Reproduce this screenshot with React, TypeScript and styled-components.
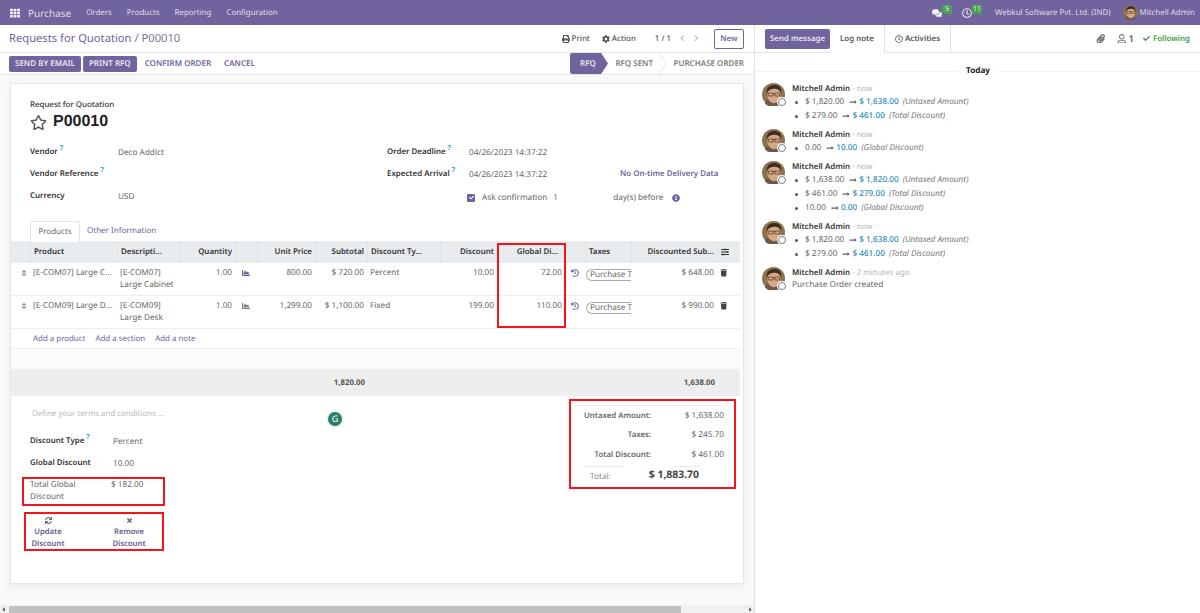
import { FunctionComponent, ReactNode } from 'react';
import styled, { createGlobalStyle } from 'styled-components';
import {
  FaCaretLeft,
  FaCaretRight,
  FaChartArea,
  FaCheck,
  FaChevronLeft,
  FaChevronRight,
  FaCog,
  FaComments,
  FaHistory,
  FaInfoCircle,
  FaLongArrowAltRight,
  FaPaperclip,
  FaPrint,
  FaRegClock,
  FaRegStar,
  FaRegUser,
  FaSlidersH,
  FaSort,
  FaSync,
  FaTh,
  FaTimes,
  FaTrash,
} from 'react-icons/fa';

const purple = '#71639e';
const red = '#f5131c';

const GlobalStyle = createGlobalStyle`
  html, body {
    margin: 0;
    height: 100%;
    overflow: hidden;
  }
  body {
    font-family: 'Noto Sans', 'Liberation Sans', sans-serif;
    font-size: 8.2px;
    line-height: 12px;
    color: #666;
    background: #fff;
    text-rendering: geometricPrecision;
  }
`;

const Page = styled.div`
  width: 1200px;
  height: 613px;
  display: flex;
  flex-direction: column;
  overflow: hidden;
`;

const Navbar = styled.header`
  height: 25px;
  flex: none;
  background: ${purple};
  color: #e0dcea;
  display: flex;
  align-items: center;
  padding: 0 5px 0 10px;
  font-size: 7.9px;
`;

const AppName = styled.span`
  font-size: 10px;
  margin: 0 15px 0 8px;
`;

const NavItem = styled.span`
  margin-right: 15px;
`;

const NavRight = styled.div`
  margin-left: auto;
  display: flex;
  align-items: center;
`;

const NavIcon = styled.span<{ $gap: number }>`
  position: relative;
  display: flex;
  margin-right: ${(p) => p.$gap}px;
  font-size: 10px;
  color: #f2f0f6;
`;

const Badge = styled.span`
  position: absolute;
  left: 10px;
  top: -3px;
  height: 9px;
  min-width: 10px;
  padding: 0 1px;
  box-sizing: border-box;
  background: #49a05a;
  color: #e6f2e6;
  font-size: 7px;
  line-height: 9px;
  text-align: center;
`;

const NavUser = styled.span`
  display: flex;
  align-items: center;
  gap: 2px;
  margin-left: 12px;
`;

const Columns = styled.div`
  flex: 1;
  min-height: 0;
  display: flex;
`;

const Main = styled.main`
  width: 754px;
  flex: none;
  display: flex;
  flex-direction: column;
  border-right: 1px solid #dee2e6;
`;

const TopRow = styled.div`
  height: 28px;
  flex: none;
  box-sizing: border-box;
  border-bottom: 1px solid #e3e5e8;
  display: flex;
  align-items: center;
  padding: 0 10px 0 9px;
`;

const Breadcrumb = styled.div`
  font-size: 11.2px;
  color: ${purple};
`;

const Current = styled.span`
  color: #7b7396;
`;

const TopActions = styled.div`
  margin-left: auto;
  display: flex;
  align-items: center;
  font-size: 7.9px;
  font-weight: 500;
  color: #555;
`;

const ActionLink = styled.span<{ $gap: number }>`
  display: flex;
  align-items: center;
  gap: 2px;
  margin-right: ${(p) => p.$gap}px;
`;

const Pager = styled.span`
  margin-right: 8px;
`;

const PagerArrows = styled.span`
  display: flex;
  gap: 7px;
  margin-right: 15px;
  font-size: 6.5px;
  color: #b5b5b5;
`;

const NewButton = styled.span`
  box-sizing: border-box;
  width: 30px;
  height: 20px;
  border: 1px solid ${purple};
  border-radius: 2px;
  color: ${purple};
  font-weight: 600;
  display: flex;
  align-items: center;
  justify-content: center;
`;

const StatusRow = styled.div`
  height: 22px;
  flex: none;
  box-sizing: border-box;
  border-bottom: 1px solid #e3e5e8;
  display: flex;
  align-items: center;
  padding: 0 10px 0 9px;
`;

const FilledButton = styled.span`
  height: 16px;
  padding: 0 6px;
  margin-right: 2px;
  background: ${purple};
  border-radius: 2px;
  color: #e9e6f0;
  font-size: 8px;
  font-weight: 600;
  line-height: 16px;
`;

const GhostButton = styled.span`
  margin: 0 7px 0 6px;
  color: ${purple};
  font-size: 8px;
  font-weight: 600;
`;

const Stages = styled.div`
  margin-left: auto;
  display: flex;
  align-items: center;
  height: 21px;
  font-size: 8px;
  font-weight: 600;
  color: #7a7a7a;
`;

const ActiveStage = styled.span`
  height: 21px;
  width: 38px;
  box-sizing: border-box;
  padding-left: 10px;
  line-height: 21px;
  background: ${purple};
  color: #e9e6f0;
  border-radius: 2px 0 0 2px;
  clip-path: polygon(0 0, 82% 0, 100% 50%, 82% 100%, 0 100%);
`;

const Stage = styled.span<{ $width: number }>`
  width: ${(p) => p.$width}px;
  text-align: right;
`;

const StageDivider = styled.svg`
  width: 7px;
  height: 21px;
  margin-left: 6px;
  margin-right: 7px;
`;

const Content = styled.div`
  flex: 1;
  min-height: 0;
  background: #f9f9fa;
  padding: 8px 10px 0 10px;
`;

const Sheet = styled.section`
  height: 501px;
  box-sizing: border-box;
  background: #fff;
  border: 1px solid #e4e6e8;
  box-shadow: 0 3px 8px rgba(0, 0, 0, 0.06);
  display: flex;
  flex-direction: column;
  position: relative;
`;

const TitleBlock = styled.div`
  padding: 15px 0 0 19px;
  height: 35px;
`;

const Overline = styled.div`
  color: #333;
  font-size: 7.9px;
  font-weight: 500;
`;

const RecordName = styled.div`
  display: flex;
  align-items: center;
  gap: 6px;
  margin-top: 1px;
  font-family: 'Liberation Sans', Arial, sans-serif;
  font-size: 16px;
  line-height: 20px;
  font-weight: 700;
  color: #1f1f1f;
`;

const StarIcon = styled(FaRegStar)`
  font-size: 17px;
  color: #555;
`;

const FieldGrid = styled.div`
  display: grid;
  grid-template-columns: 88px 269px 82px 151px 1fr;
  grid-auto-rows: 22px;
  align-items: center;
  padding: 7px 0 0 19px;
  height: 66px;
`;

const Label = styled.span`
  color: #333;
  font-size: 7.9px;
  font-weight: 600;
`;

const Help = styled.sup`
  color: #2e9bc6;
  font-size: 7px;
  line-height: 0;
  font-weight: 700;
  margin-left: 2px;
`;

const Value = styled.span`
  color: #666;
  padding-top: 1px;
`;

const DeliveryNote = styled.span`
  color: ${purple};
  font-size: 7.9px;
  font-weight: 600;
  text-align: left;
`;

const ConfirmCell = styled.div`
  grid-column: 3 / span 3;
  display: flex;
  align-items: center;
  padding: 3px 0 0 80px;
`;

const CheckBox = styled.span`
  width: 8px;
  height: 8px;
  background: ${purple};
  border-radius: 1px;
  display: flex;
  align-items: center;
  justify-content: center;
  color: #fff;
  font-size: 5px;
  margin-right: 7px;
`;

const ConfirmDays = styled.span`
  margin-left: 6px;
  width: 60px;
`;

const InfoIcon = styled(FaInfoCircle)`
  margin-left: 9px;
  font-size: 8px;
  color: ${purple};
`;

const Tabs = styled.div`
  margin-top: 14px;
  height: 20px;
  padding-left: 19px;
  display: flex;
  align-items: flex-end;
  font-size: 8px;
`;

const ActiveTab = styled.span`
  box-sizing: border-box;
  width: 50px;
  height: 21px;
  margin-bottom: -1px;
  background: #fff;
  border: 1px solid #e2e4e6;
  border-bottom: none;
  border-radius: 2px 2px 0 0;
  text-align: center;
  line-height: 20px;
  position: relative;
  z-index: 1;
`;

const Tab = styled.span`
  margin-left: 7px;
  line-height: 20px;
  color: ${purple};
`;

const TableWrap = styled.div`
  position: relative;
  margin-right: 3px;
`;

const columns = '19px 87px 63px 55px 22px 58px 52px 73px 57px 68px 20px 46px 86px 23px';

const HeadRow = styled.div`
  display: grid;
  grid-template-columns: ${columns};
  height: 22px;
  background: #e9ecef;
  color: #333;
  font-size: 7.9px;
  font-weight: 600;
`;

const HeadCell = styled.div<{ $right?: boolean; $plain?: boolean; $pad?: number }>`
  display: flex;
  align-items: center;
  justify-content: ${(p) => (p.$right ? 'flex-end' : 'flex-start')};
  padding: 0 ${(p) => p.$pad ?? 3}px 0 3px;
  overflow: hidden;
  white-space: nowrap;
  border-left: ${(p) => (p.$plain ? 'none' : '1px solid #dfe2e6')};
`;

const BodyRow = styled.div`
  display: grid;
  grid-template-columns: ${columns};
  height: 33px;
  box-sizing: border-box;
  border-bottom: 1px solid #eceeef;
  padding-top: 4px;
`;

const Cell = styled.div<{ $right?: boolean; $flush?: boolean }>`
  padding: 0 ${(p) => (p.$flush ? 0 : 3)}px;
  text-align: ${(p) => (p.$right ? 'right' : 'left')};
  white-space: nowrap;
`;

const IconCell = styled.div<{ $color?: string; $size?: number; $inset?: number }>`
  display: flex;
  justify-content: ${(p) => (p.$inset ? 'flex-start' : 'center')};
  padding: 2px 0 0 ${(p) => p.$inset ?? 0}px;
  font-size: ${(p) => p.$size ?? 8}px;
  color: ${(p) => p.$color ?? '#777'};
`;

const TaxTag = styled.span`
  display: block;
  margin: 2px 0 0 1px;
  width: 45px;
  height: 12px;
  box-sizing: border-box;
  border: 1px solid #aaa;
  border-right: none;
  border-radius: 7px 0 0 7px;
  padding-left: 3px;
  line-height: 10px;
`;

const AddRow = styled.div`
  height: 20px;
  box-sizing: border-box;
  padding-left: 22px;
  border-bottom: 1px solid #eceeef;
  display: flex;
  align-items: center;
  gap: 10px;
  font-size: 7.9px;
  color: ${purple};
`;

const BlankRow = styled.div`
  height: 20px;
  background: #fbfbfb;
`;

const TotalRow = styled.div`
  display: grid;
  grid-template-columns: ${columns};
  height: 27px;
  align-items: center;
  background: #eeeeee;
  font-size: 7.8px;
  font-weight: 700;
  color: #555;
`;

const SpanLeft = styled.div`
  grid-column: 1 / span 7;
  padding-right: 2px;
  text-align: right;
`;

const SpanRight = styled.div`
  grid-column: 8 / span 6;
  padding-right: 2px;
  text-align: right;
`;

const GlobalColumnBox = styled.div`
  position: absolute;
  left: 486px;
  top: 2px;
  width: 69px;
  height: 85px;
  box-sizing: border-box;
  border: 2px solid ${red};
`;

const Footer = styled.div`
  flex: 1;
  position: relative;
  display: flex;
  justify-content: space-between;
  padding-right: 7px;
`;

const FooterLeft = styled.div`
  padding: 12px 0 0 11px;
  width: 153px;
`;

const Terms = styled.div`
  color: #b9b9b9;
  font-size: 7.9px;
  padding-left: 10px;
  height: 12px;
`;

const DiscountGrid = styled.div`
  display: grid;
  grid-template-columns: 83px 1fr;
  grid-auto-rows: 22px;
  align-items: center;
  margin-top: 10px;
  padding-left: 8px;
`;

const TotalGlobalBox = styled.div`
  box-sizing: border-box;
  width: 143px;
  height: 29px;
  margin-top: 3px;
  border: 2px solid ${red};
  padding: 0 0 0 6px;
  display: grid;
  grid-template-columns: 81px 1fr;
  line-height: 12px;
`;

const ButtonsBox = styled.div`
  box-sizing: border-box;
  width: 140px;
  height: 39px;
  margin: 6px 0 0 2px;
  border: 2px solid ${red};
  display: grid;
  grid-template-columns: 44px 66px;
  justify-content: space-between;
  color: #655a90;
  font-size: 7.7px;
  font-weight: 600;
  text-align: center;
  line-height: 12px;
`;

const ButtonIcon = styled.div`
  display: flex;
  justify-content: center;
  height: 12px;
  align-items: center;
  font-size: 7px;
`;

const Totals = styled.div`
  box-sizing: border-box;
  width: 167px;
  height: 90px;
  margin-top: 3px;
  border: 2px solid ${red};
  padding: 4px 10px 0 2px;
`;

const TotalsLine = styled.div<{ $first?: boolean }>`
  display: grid;
  grid-template-columns: 78px 1fr;
  height: 19.5px;
  align-items: center;
  color: #666;
  border-top: ${(p) => (p.$first ? '1px solid #eee' : 'none')};
`;

const TotalsKey = styled.span`
  text-align: right;
  font-size: 7.8px;
  font-weight: 600;
`;

const TotalsValue = styled.span`
  text-align: right;
`;

const GrandTotal = styled.div`
  position: relative;
  display: grid;
  grid-template-columns: 40px 1fr;
  margin-top: 1px;
  padding-left: 11px;
  align-items: center;
  &::after {
    content: '';
    position: absolute;
    top: 0;
    right: 25px;
    width: 25px;
    height: 1px;
    background: #e8e8e8;
  }
`;

const GrandKey = styled.span`
  color: #888;
  padding-left: 6px;
  border-top: 1px solid #e8e8e8;
  height: 18px;
  line-height: 20px;
`;

const GrandValue = styled.span`
  font-size: 10.4px;
  font-weight: 700;
  color: #444;
  text-align: right;
  padding-right: 25px;
`;

const Grammarly = styled.span`
  position: absolute;
  left: 315px;
  top: 14px;
  width: 14px;
  height: 14px;
  border-radius: 50%;
  background: #2a7e6b;
  border: 2px solid #eef1f1;
  color: #fff;
  font-size: 9px;
  line-height: 14px;
  text-align: center;
`;

const ScrollBar = styled.div`
  height: 8px;
  flex: none;
  background: #f1f1f1;
  display: flex;
  align-items: center;
  font-size: 7px;
  color: #555;
`;

const ScrollThumb = styled.div`
  width: 672px;
  height: 7px;
  margin-left: 2px;
  background: #c1c1c1;
`;

const ScrollEnd = styled(FaCaretRight)`
  margin-left: auto;
`;

const Chatter = styled.aside`
  flex: 1;
  display: flex;
  flex-direction: column;
  background: #fff;
`;

const ChatterBar = styled.div`
  height: 28px;
  flex: none;
  box-sizing: border-box;
  border-bottom: 1px solid #dee2e6;
  display: flex;
  align-items: stretch;
  padding: 0 10px 0 10px;
  font-size: 7.9px;
  font-weight: 600;
`;

const SendButton = styled.span`
  align-self: flex-start;
  margin-top: 4px;
  width: 65px;
  height: 20px;
  background: ${purple};
  border-radius: 2px;
  color: #e9e6f0;
  text-align: center;
  line-height: 20px;
`;

const ChatTab = styled.span<{ $active?: boolean }>`
  box-sizing: border-box;
  height: 28px;
  padding: 0 10px;
  display: flex;
  align-items: center;
  gap: 2px;
  color: #555;
  margin-bottom: -1px;
  background: #fff;
  border-right: 1px solid #dee2e6;
  border-bottom: ${(p) => (p.$active ? '1px solid #fff' : '1px solid #dee2e6')};
  z-index: 1;
`;

const ChatTools = styled.div`
  margin-left: auto;
  display: flex;
  align-items: center;
  color: #666;
`;

const ToolIcon = styled.span<{ $gap: number }>`
  display: flex;
  align-items: center;
  gap: 2px;
  margin-right: ${(p) => p.$gap}px;
  font-size: 9.5px;
`;

const Following = styled.span`
  display: flex;
  align-items: center;
  gap: 3px;
  color: #3f9c45;
`;

const DateLine = styled.div`
  height: 12px;
  margin: 12px 0 6px;
  display: flex;
  align-items: center;
  color: #222;
  font-weight: 700;
  &::before,
  &::after {
    content: '';
    flex: 1;
    height: 1px;
    background: #f1f1f1;
  }
  &::before {
    flex: none;
    width: 203px;
    margin-right: 8px;
  }
  &::after {
    margin-left: 8px;
  }
`;

const MessageList = styled.div`
  display: flex;
  flex-direction: column;
  gap: 6px;
  padding-left: 7px;
`;

const Message = styled.div`
  display: flex;
  gap: 7px;
`;

const AvatarWrap = styled.span`
  position: relative;
  display: block;
  width: 23px;
  height: 23px;
  flex: none;
`;

const StatusDot = styled.span`
  position: absolute;
  right: -1px;
  bottom: 0;
  width: 6px;
  height: 6px;
  border-radius: 50%;
  background: #fff;
  border: 1px solid #6f7f86;
  box-shadow: 0 0 0 1px #fff;
`;

const Author = styled.div`
  height: 12px;
  color: #333;
  font-size: 7.9px;
  font-weight: 600;
`;

const When = styled.span`
  color: #b5b5b5;
  font-weight: 400;
`;

const ChangeItem = styled.div`
  height: 14px;
  display: flex;
  align-items: center;
  padding-left: 3px;
`;

const Bullet = styled.span`
  width: 3px;
  height: 3px;
  border-radius: 50%;
  background: #555;
  margin-right: 7px;
`;

const ArrowIcon = styled(FaLongArrowAltRight)`
  font-size: 8px;
  margin: 0 2px 0 5px;
  color: #666;
`;

const NewValue = styled.span`
  color: #2a8cb5;
  font-weight: 500;
`;

const FieldName = styled.em`
  margin-left: 4px;
  color: #777;
`;

const AvatarSvg = styled.svg<{ $size: number }>`
  display: block;
  width: ${(p) => p.$size}px;
  height: ${(p) => p.$size}px;
`;

const Avatar: FunctionComponent<{ size?: number }> = ({ size = 23 }) => (
  <AvatarSvg $size={size} viewBox="0 0 24 24">
    <circle cx="12" cy="12" r="12" fill="#8a7350" />
    <path d="M3 21c1-4 5-4 9-4s8 0 9 4a12 12 0 0 1-18 0z" fill="#6b5a4a" />
    <ellipse cx="12.5" cy="12.500" rx="7" ry="8.500" fill="#d8a684" />
    <path d="M5 11C4 4 9 2 13 2s8 2 7 9c-1-3-3-5-7-5S6 8 5 11z" fill="#3a2e22" />
    <path d="M6.5 10.500h5v3h-5zM13.500 10.500h5v3h-5zM11.500 11h2" fill="none" stroke="#3a3028" strokeWidth="0.7" />
  </AvatarSvg>
);

const Change: FunctionComponent<{ from: string; to: string; field: string }> = ({ from, to, field }) => (
  <ChangeItem>
    <Bullet />
    <span>{from}</span>
    <ArrowIcon />
    <NewValue>{to}</NewValue>
    <FieldName>({field})</FieldName>
  </ChangeItem>
);

const ChatMessage: FunctionComponent<{ when: string; children: ReactNode }> = ({ when, children }) => (
  <Message>
    <AvatarWrap>
      <Avatar />
      <StatusDot />
    </AvatarWrap>
    <div>
      <Author>
        Mitchell Admin <When>- {when}</When>
      </Author>
      {children}
    </div>
  </Message>
);

const StageLine = () => (
  <StageDivider viewBox="0 0 7 21">
    <path d="M0 0l7 10.500L0 21" fill="none" stroke="#e3e5e8" />
  </StageDivider>
);

const rows = [
  {
    product: '[E-COM07] Large C...',
    code: '[E-COM07]',
    name: 'Large Cabinet',
    price: '800.00',
    subtotal: '$ 720.00',
    type: 'Percent',
    discount: '10.00',
    global: '72.00',
    final: '$ 648.00',
    chart: purple,
  },
  {
    product: '[E-COM09] Large D...',
    code: '[E-COM09]',
    name: 'Large Desk',
    price: '1,299.00',
    subtotal: '$ 1,100.00',
    type: 'Fixed',
    discount: '199.00',
    global: '110.00',
    final: '$ 990.00',
    chart: '#7d7d8c',
  },
];

const App: FunctionComponent = () => (
  <Page>
    <GlobalStyle />
    <Navbar>
      <FaTh size={10} color="#f2f0f6" />
      <AppName>Purchase</AppName>
      <NavItem>Orders</NavItem>
      <NavItem>Products</NavItem>
      <NavItem>Reporting</NavItem>
      <NavItem>Configuration</NavItem>
      <NavRight>
        <NavIcon $gap={20}>
          <FaComments />
          <Badge>5</Badge>
        </NavIcon>
        <NavIcon $gap={23}>
          <FaRegClock />
          <Badge>11</Badge>
        </NavIcon>
        <span>Webkul Software Pvt. Ltd. (IND)</span>
        <NavUser>
          <Avatar size={15} />
          Mitchell Admin
        </NavUser>
      </NavRight>
    </Navbar>
    <Columns>
      <Main>
        <TopRow>
          <Breadcrumb>
            Requests for Quotation <Current>/ P00010</Current>
          </Breadcrumb>
          <TopActions>
            <ActionLink $gap={12}>
              <FaPrint size={8} /> Print
            </ActionLink>
            <ActionLink $gap={19}>
              <FaCog size={8} /> Action
            </ActionLink>
            <Pager>1 / 1</Pager>
            <PagerArrows>
              <FaChevronLeft />
              <FaChevronRight />
            </PagerArrows>
            <NewButton>New</NewButton>
          </TopActions>
        </TopRow>
        <StatusRow>
          <FilledButton>SEND BY EMAIL</FilledButton>
          <FilledButton>PRINT RFQ</FilledButton>
          <GhostButton>CONFIRM ORDER</GhostButton>
          <GhostButton>CANCEL</GhostButton>
          <Stages>
            <ActiveStage>RFQ</ActiveStage>
            <Stage $width={45}>RFQ SENT</Stage>
            <StageLine />
            <Stage $width={71}>PURCHASE ORDER</Stage>
          </Stages>
        </StatusRow>
        <Content>
          <Sheet>
            <TitleBlock>
              <Overline>Request for Quotation</Overline>
              <RecordName>
                <StarIcon />
                P00010
              </RecordName>
            </TitleBlock>
            <FieldGrid>
              <Label>
                Vendor<Help>?</Help>
              </Label>
              <Value>Deco Addict</Value>
              <Label>
                Order Deadline<Help>?</Help>
              </Label>
              <Value>04/26/2023 14:37:22</Value>
              <span />
              <Label>
                Vendor Reference<Help>?</Help>
              </Label>
              <span />
              <Label>
                Expected Arrival<Help>?</Help>
              </Label>
              <Value>04/26/2023 14:37:22</Value>
              <DeliveryNote>No On-time Delivery Data</DeliveryNote>
              <Label>Currency</Label>
              <Value>USD</Value>
              <ConfirmCell>
                <CheckBox>
                  <FaCheck />
                </CheckBox>
                Ask confirmation
                <ConfirmDays>1</ConfirmDays>
                day(s) before
                <InfoIcon />
              </ConfirmCell>
            </FieldGrid>
            <Tabs>
              <ActiveTab>Products</ActiveTab>
              <Tab>Other Information</Tab>
            </Tabs>
            <TableWrap>
              <HeadRow>
                <HeadCell $plain />
                <HeadCell>Product</HeadCell>
                <HeadCell>Descripti...</HeadCell>
                <HeadCell $right>Quantity</HeadCell>
                <HeadCell />
                <HeadCell $right>Unit Price</HeadCell>
                <HeadCell $right>Subtotal</HeadCell>
                <HeadCell>Discount Ty...</HeadCell>
                <HeadCell $right>Discount</HeadCell>
                <HeadCell $right $pad={7}>
                  Global Di...
                </HeadCell>
                <HeadCell />
                <HeadCell>Taxes</HeadCell>
                <HeadCell $right>Discounted Sub...</HeadCell>
                <HeadCell>
                  <FaSlidersH size={8} />
                </HeadCell>
              </HeadRow>
              {rows.map((row) => (
                <BodyRow key={row.code}>
                  <IconCell $color="#999" $inset={9}>
                    <FaSort />
                  </IconCell>
                  <Cell>{row.product}</Cell>
                  <Cell>
                    {row.code}
                    <br />
                    {row.name}
                  </Cell>
                  <Cell $right>1.00</Cell>
                  <IconCell $color={row.chart}>
                    <FaChartArea />
                  </IconCell>
                  <Cell $right>{row.price}</Cell>
                  <Cell $right>{row.subtotal}</Cell>
                  <Cell>{row.type}</Cell>
                  <Cell $right>{row.discount}</Cell>
                  <Cell $right>{row.global}</Cell>
                  <IconCell $color={purple}>
                    <FaHistory />
                  </IconCell>
                  <Cell $flush>
                    <TaxTag>Purchase T</TaxTag>
                  </Cell>
                  <Cell $right>{row.final}</Cell>
                  <IconCell $color="#444" $size={7.5} $inset={3}>
                    <FaTrash />
                  </IconCell>
                </BodyRow>
              ))}
              <AddRow>
                <span>Add a product</span>
                <span>Add a section</span>
                <span>Add a note</span>
              </AddRow>
              <BlankRow />
              <TotalRow>
                <SpanLeft>1,820.00</SpanLeft>
                <SpanRight>1,638.00</SpanRight>
              </TotalRow>
              <GlobalColumnBox />
            </TableWrap>
            <Footer>
              <FooterLeft>
                <Terms>Define your terms and conditions ...</Terms>
                <DiscountGrid>
                  <Label>
                    Discount Type<Help>?</Help>
                  </Label>
                  <Value>Percent</Value>
                  <Label>Global Discount</Label>
                  <Value>10.00</Value>
                </DiscountGrid>
                <TotalGlobalBox>
                  <span>
                    Total Global
                    <br />
                    Discount
                  </span>
                  <span>$ 182.00</span>
                </TotalGlobalBox>
                <ButtonsBox>
                  <div>
                    <ButtonIcon>
                      <FaSync />
                    </ButtonIcon>
                    Update
                    <br />
                    Discount
                  </div>
                  <div>
                    <ButtonIcon>
                      <FaTimes />
                    </ButtonIcon>
                    Remove
                    <br />
                    Discount
                  </div>
                </ButtonsBox>
              </FooterLeft>
              <Grammarly>G</Grammarly>
              <Totals>
                <TotalsLine $first>
                  <TotalsKey>Untaxed Amount:</TotalsKey>
                  <TotalsValue>$ 1,638.00</TotalsValue>
                </TotalsLine>
                <TotalsLine>
                  <TotalsKey>Taxes:</TotalsKey>
                  <TotalsValue>$ 245.70</TotalsValue>
                </TotalsLine>
                <TotalsLine>
                  <TotalsKey>Total Discount:</TotalsKey>
                  <TotalsValue>$ 461.00</TotalsValue>
                </TotalsLine>
                <GrandTotal>
                  <GrandKey>Total:</GrandKey>
                  <GrandValue>$ 1,883.70</GrandValue>
                </GrandTotal>
              </Totals>
            </Footer>
          </Sheet>
        </Content>
        <ScrollBar>
          <FaCaretLeft />
          <ScrollThumb />
          <ScrollEnd />
        </ScrollBar>
      </Main>
      <Chatter>
        <ChatterBar>
          <SendButton>Send message</SendButton>
          <ChatTab $active>Log note</ChatTab>
          <ChatTab>
            <FaRegClock size={8} /> Activities
          </ChatTab>
          <ChatTools>
            <ToolIcon $gap={12}>
              <FaPaperclip />
            </ToolIcon>
            <ToolIcon $gap={9}>
              <FaRegUser /> 1
            </ToolIcon>
            <Following>
              <FaCheck size={7} /> Following
            </Following>
          </ChatTools>
        </ChatterBar>
        <DateLine>Today</DateLine>
        <MessageList>
          <ChatMessage when="now">
            <Change from="$ 1,820.00" to="$ 1,638.00" field="Untaxed Amount" />
            <Change from="$ 279.00" to="$ 461.00" field="Total Discount" />
          </ChatMessage>
          <ChatMessage when="now">
            <Change from="0.00" to="10.00" field="Global Discount" />
          </ChatMessage>
          <ChatMessage when="now">
            <Change from="$ 1,638.00" to="$ 1,820.00" field="Untaxed Amount" />
            <Change from="$ 461.00" to="$ 279.00" field="Total Discount" />
            <Change from="10.00" to="0.00" field="Global Discount" />
          </ChatMessage>
          <ChatMessage when="now">
            <Change from="$ 1,820.00" to="$ 1,638.00" field="Untaxed Amount" />
            <Change from="$ 279.00" to="$ 461.00" field="Total Discount" />
          </ChatMessage>
          <ChatMessage when="2 minutes ago">Purchase Order created</ChatMessage>
        </MessageList>
      </Chatter>
    </Columns>
  </Page>
);

export default App;
